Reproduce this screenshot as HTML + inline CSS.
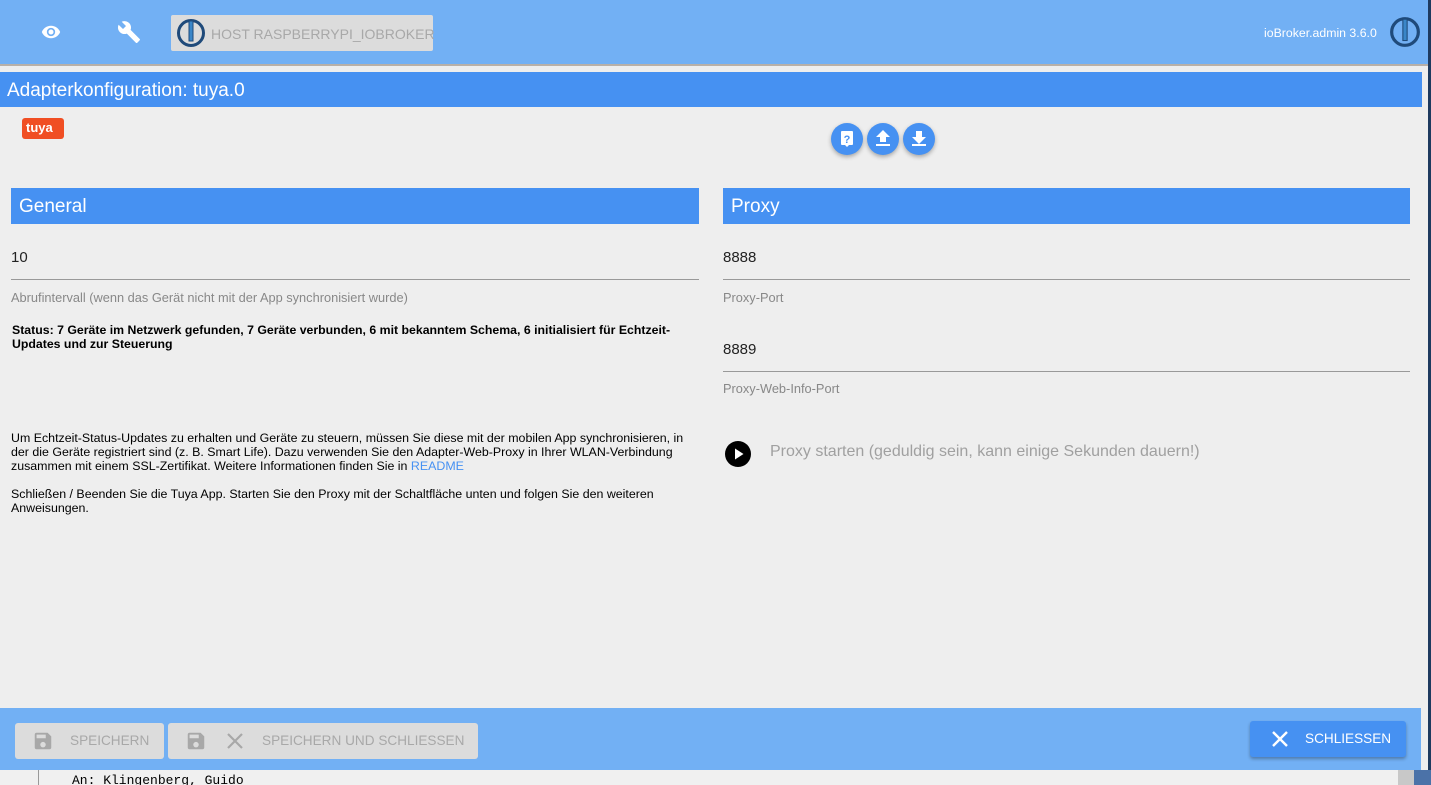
<!DOCTYPE html>
<html><head><meta charset="utf-8"><style>
*{margin:0;padding:0;box-sizing:border-box}
html,body{width:1431px;height:785px;overflow:hidden}
body{background:#1e3a5f;font-family:"Liberation Sans",Arial,sans-serif;position:relative}
.abs{position:absolute}
#top{left:0;top:0;width:1428px;height:66px;background:#72b0f4;border-bottom:2px solid #b8b0a8}
#main{left:0;top:66px;width:1428px;height:704px;background:#eeeeee}
#title{left:0;top:72px;width:1422px;height:35px;background:#4691f2;color:#fff;font-size:19px;padding:8px 7px}
.hdr{height:36px;background:#4691f2;color:#fff;font-size:19px;padding:8px 8px}
.val{font-size:15px;color:#222}
.line{height:1px;background:#999}
.lbl{font-size:12.8px;color:#888}
.fab{width:32px;height:32px;border-radius:50%;background:#4691f2;box-shadow:0 2px 4px rgba(0,0,0,.3)}
#bottom{left:0;top:708px;width:1421px;height:62px;background:#72b0f4}
.btn{background:#dcdcdc;border-radius:3px;color:#a8a8a8;font-size:13.6px;height:36px;top:723px}
</style></head><body>
<div id="top" class="abs"></div>
<svg class="abs" style="left:38px;top:22px" width="26" height="20" viewBox="0 0 24 24"><path fill="#fff" d="M12 4.5C7 4.5 2.7 7.6 1 12c1.7 4.4 6 7.5 11 7.5s9.3-3.1 11-7.5c-1.7-4.4-6-7.5-11-7.5zM12 17a5 5 0 1 1 0-10 5 5 0 0 1 0 10zm0-8a3 3 0 1 0 0 6 3 3 0 0 0 0-6z"/></svg>
<svg class="abs" style="left:117px;top:20px" width="24" height="24" viewBox="0 0 24 24"><path fill="#fff" d="M22.7 19l-9.1-9.1c.9-2.3.4-5-1.5-6.9-2-2-5-2.4-7.4-1.3L9 6 6 9 1.6 4.7C.4 7.1.9 10.1 2.9 12.1c1.9 1.9 4.6 2.4 6.9 1.5l9.1 9.1c.4.4 1 .4 1.4 0l2.3-2.3c.5-.4.5-1.1.1-1.4z"/></svg>
<div class="abs" style="left:171px;top:15px;width:262px;height:36px;background:#dcdcdc;border-radius:2px"></div>
<svg class="abs" style="left:176px;top:18px" width="30" height="30" viewBox="0 0 30 30"><circle cx="15" cy="15" r="12.5" fill="none" stroke="#1f4a7a" stroke-width="3"/><rect x="13" y="3" width="4" height="20" fill="#3a86c8" stroke="#1f4a7a" stroke-width="1"/></svg>
<div class="abs" style="left:211px;top:26px;font-size:14px;color:#a8a8a8">HOST RASPBERRYPI_IOBROKER</div>
<div class="abs" style="left:1264px;top:26px;font-size:12.3px;color:#fff">ioBroker.admin 3.6.0</div>
<svg class="abs" style="left:1389px;top:16px" width="32" height="32" viewBox="0 0 30 30"><circle cx="15" cy="15" r="12.5" fill="none" stroke="#1f4a7a" stroke-width="3"/><rect x="13" y="3" width="4" height="20" fill="#3a86c8" stroke="#1f4a7a" stroke-width="1"/></svg>
<div id="main" class="abs"></div>
<div id="title" class="abs">Adapterkonfiguration: tuya.0</div>
<div class="abs" style="left:22px;top:118px;width:42px;height:21px;background:#f04e23;border-radius:3px;color:#fff;font-weight:bold;font-size:13px;padding:2px 0 0 4px">tuya</div>
<div class="abs fab" style="left:831px;top:123px"><svg width="32" height="32" viewBox="0 0 32 32"><rect x="10" y="8" width="12" height="14" rx="1" fill="#fff"/><path d="M14 22l2 2 2-2z" fill="#fff"/><text x="16" y="20" font-size="11" font-weight="bold" text-anchor="middle" fill="#4691f2" font-family="Liberation Sans">?</text></svg></div>
<div class="abs fab" style="left:867px;top:123px"><svg width="32" height="32" viewBox="0 0 32 32"><path fill="#fff" d="M13 19h6v-5h4l-7-7-7 7h4zM9 21h14v2H9z"/></svg></div>
<div class="abs fab" style="left:903px;top:123px"><svg width="32" height="32" viewBox="0 0 32 32"><path fill="#fff" d="M23 14h-4V8h-6v6H9l7 7zM9 21h14v2H9z"/></svg></div>

<div class="abs hdr" style="left:11px;top:188px;width:688px">General</div>
<div class="abs val" style="left:11px;top:249px">10</div>
<div class="abs line" style="left:11px;top:279px;width:688px"></div>
<div class="abs lbl" style="left:11px;top:290px">Abrufintervall (wenn das Gerät nicht mit der App synchronisiert wurde)</div>
<div class="abs" style="left:12px;top:323px;width:690px;font-size:12.3px;font-weight:bold;color:#000;line-height:14px">Status: 7 Geräte im Netzwerk gefunden, 7 Geräte verbunden, 6 mit bekanntem Schema, 6 initialisiert für Echtzeit-Updates und zur Steuerung</div>
<div class="abs" style="left:11px;top:431px;width:692px;font-size:12.4px;color:#000;line-height:14px">Um Echtzeit-Status-Updates zu erhalten und Geräte zu steuern, müssen Sie diese mit der mobilen App synchronisieren, in der die Geräte registriert sind (z. B. Smart Life). Dazu verwenden Sie den Adapter-Web-Proxy in Ihrer WLAN-Verbindung zusammen mit einem SSL-Zertifikat. Weitere Informationen finden Sie in <span style="color:#4691f2">README</span><br><br>Schließen / Beenden Sie die Tuya App. Starten Sie den Proxy mit der Schaltfläche unten und folgen Sie den weiteren Anweisungen.</div>

<div class="abs hdr" style="left:723px;top:188px;width:687px">Proxy</div>
<div class="abs val" style="left:723px;top:249px">8888</div>
<div class="abs line" style="left:723px;top:279px;width:687px"></div>
<div class="abs lbl" style="left:723px;top:290px">Proxy-Port</div>
<div class="abs val" style="left:723px;top:341px">8889</div>
<div class="abs line" style="left:723px;top:371px;width:687px"></div>
<div class="abs lbl" style="left:723px;top:381px">Proxy-Web-Info-Port</div>
<svg class="abs" style="left:724px;top:440px" width="28" height="28" viewBox="0 0 28 28"><circle cx="14" cy="14" r="13" fill="#000"/><path d="M11 8.5v11l8.5-5.5z" fill="#fff"/></svg>
<div class="abs" style="left:770px;top:443px;font-size:16px;color:#a0a0a0">Proxy starten (geduldig sein, kann einige Sekunden dauern!)</div>

<div class="abs" style="left:0;top:770px;width:1431px;height:15px;background:#f0f0f0"></div>
<div class="abs" style="left:38px;top:770px;width:1px;height:15px;background:#999"></div>
<div class="abs" style="left:1398px;top:770px;width:16px;height:15px;background:#c8c8c8"></div>
<div class="abs" style="left:1414px;top:770px;width:17px;height:15px;background:#4b72a8"></div>
<div class="abs" style="left:72px;top:773px;font-family:'Liberation Mono',monospace;font-size:13px;color:#000">An: Klingenberg, Guido</div>
<div class="abs" style="left:1421px;top:708px;width:7px;height:62px;background:#eeeeee"></div>
<div id="bottom" class="abs"></div>
<div class="abs btn" style="left:15px;width:149px"><svg class="abs" style="left:17px;top:7px" width="22" height="22" viewBox="0 0 24 24"><path fill="#a8a8a8" d="M17 3H5a2 2 0 0 0-2 2v14a2 2 0 0 0 2 2h14a2 2 0 0 0 2-2V7zm-5 16a3 3 0 1 1 0-6 3 3 0 0 1 0 6zm3-10H5V5h10z"/></svg><span class="abs" style="left:55px;top:10px">SPEICHERN</span></div>
<div class="abs btn" style="left:168px;width:310px"><svg class="abs" style="left:17px;top:7px" width="22" height="22" viewBox="0 0 24 24"><path fill="#a8a8a8" d="M17 3H5a2 2 0 0 0-2 2v14a2 2 0 0 0 2 2h14a2 2 0 0 0 2-2V7zm-5 16a3 3 0 1 1 0-6 3 3 0 0 1 0 6zm3-10H5V5h10z"/></svg><svg class="abs" style="left:57px;top:8px" width="20" height="20" viewBox="0 0 20 20"><path d="M3 3l14 14M17 3L3 17" stroke="#a8a8a8" stroke-width="2.2"/></svg><span class="abs" style="left:94px;top:10px">SPEICHERN UND SCHLIESSEN</span></div>
<div class="abs" style="left:1250px;top:721px;width:156px;height:36px;background:#4691f2;border-radius:3px;box-shadow:0 2px 3px rgba(0,0,0,.3);color:#fff;font-size:13.6px"><svg class="abs" style="left:20px;top:8px" width="20" height="20" viewBox="0 0 20 20"><path d="M3 3l14 14M17 3L3 17" stroke="#fff" stroke-width="2.4"/></svg><span class="abs" style="left:55px;top:10px">SCHLIESSEN</span></div>
</body></html>
